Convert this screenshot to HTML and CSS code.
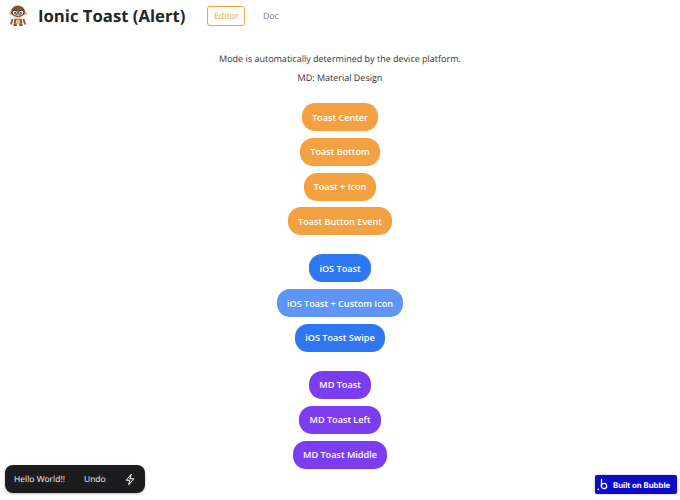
FILE: index.html
```html
<!DOCTYPE html>
<html lang="en">
<head>
<meta charset="utf-8">
<title>Ionic Toast (Alert)</title>
<link rel="stylesheet" href="styles.css">
</head>
<body>
<header class="header">
  <svg class="logo" width="20" height="22" viewBox="0 0 24 27" aria-hidden="true">
    <circle cx="3.500" cy="10" r="2.600" fill="#e8b98a"/>
    <circle cx="20.500" cy="10" r="2.600" fill="#e8b98a"/>
    <ellipse cx="12" cy="8" rx="8.500" ry="7.500" fill="#8a5226"/>
    <ellipse cx="12" cy="12" rx="6.500" ry="4.500" fill="#eec39a"/>
    <circle cx="8" cy="9.500" r="3.200" fill="#fff" stroke="#2b2b2b" stroke-width="1.200"/>
    <circle cx="16" cy="9.500" r="3.200" fill="#fff" stroke="#2b2b2b" stroke-width="1.200"/>
    <circle cx="8.400" cy="9.800" r="1.100" fill="#222"/>
    <circle cx="15.600" cy="9.800" r="1.100" fill="#222"/>
    <path d="M9 14h6" stroke="#7a3d1c" stroke-width="1"/>
    <path d="M7.500 17h9l1 6h-11z" fill="#8a5226"/>
    <ellipse cx="12" cy="20.500" rx="3" ry="3" fill="#e8b98a"/>
    <path d="M5 18l-1.500 5M19 18l1.500 5" stroke="#8a5226" stroke-width="2.200" stroke-linecap="round"/>
    <ellipse cx="8.500" cy="24.500" rx="2.500" ry="1.300" fill="#7a4520"/>
    <ellipse cx="15.500" cy="24.500" rx="2.500" ry="1.300" fill="#7a4520"/>
  </svg>
  <h1 class="title">Ionic Toast (Alert)</h1>
  <nav class="tabs">
    <span class="tab tab-active">Editor</span>
    <span class="tab">Doc</span>
  </nav>
</header>
<main class="main">
  <p class="line">Mode is automatically determined by the device platform.</p>
  <p class="line line-second">MD: Material Design</p>
  <div class="group">
    <button class="btn orange">Toast Center</button>
    <button class="btn orange">Toast Bottom</button>
    <button class="btn orange">Toast + Icon</button>
    <button class="btn orange">Toast Button Event</button>
  </div>
  <div class="group">
    <button class="btn blue">iOS Toast</button>
    <button class="btn blue-light">iOS Toast + Custom Icon</button>
    <button class="btn blue">iOS Toast Swipe</button>
  </div>
  <div class="group">
    <button class="btn purple">MD Toast</button>
    <button class="btn purple">MD Toast Left</button>
    <button class="btn purple">MD Toast Middle</button>
  </div>
</main>
<div class="toast">
  <span class="toast-msg">Hello World!!</span>
  <span class="toast-undo">Undo</span>
  <svg class="toast-icon" width="12" height="13" viewBox="0 0 24 24" fill="none" stroke="#fff" stroke-width="2" stroke-linejoin="round" stroke-linecap="round" aria-hidden="true">
    <path d="M14.500 1.500 4.500 13.500h7l-2 9 10-12h-7z"/>
  </svg>
</div>
<div class="bubble">
  <svg class="bubble-logo" width="12" height="13" viewBox="0 0 12 13" fill="none" stroke="#fff" stroke-width="1.300" aria-hidden="true">
    <path d="M4.500 1v7"/>
    <circle cx="7" cy="8" r="2.700"/>
    <circle cx="1.300" cy="11.300" r="0.900" fill="#fff" stroke="none"/>
  </svg>
  <span>Built on Bubble</span>
</div>
</body>
</html>
```

FILE: styles.css
```css
* { box-sizing: border-box; }
html, body { margin: 0; padding: 0; }
body {
  width: 680px;
  height: 500px;
  position: relative;
  overflow: hidden;
  background: #fff;
  font-family: "Open Sans", sans-serif;
  color: #333;
  text-rendering: geometricPrecision;
}
.header {
  display: flex;
  align-items: center;
  height: 31px;
  padding-left: 8px;
}
.logo { flex: none; margin-right: 10px; }
.title {
  margin: 0;
  font-size: 16.700px;
  font-weight: 700;
  color: #262626;
  white-space: nowrap;
}
.tabs {
  display: flex;
  align-items: center;
  margin-left: 22px;
  gap: 18px;
}
.tab {
  font-size: 8.800px;
  color: #7a7a7a;
}
.tab-active {
  display: flex;
  align-items: center;
  height: 20px;
  padding: 0 5.500px;
  border: 1px solid #f4a142;
  border-radius: 3px;
  color: #f4a142;
}
.main {
  display: flex;
  flex-direction: column;
  align-items: center;
  padding-top: 21px;
}
.line {
  margin: 0;
  font-size: 9px;
  line-height: 14px;
  color: #333;
}
.line-second { margin-top: 5px; }
.group {
  display: flex;
  flex-direction: column;
  align-items: center;
  gap: 6.800px;
  margin-bottom: 19px;
}
.line-second + .group { margin-top: 18px; }
.btn {
  height: 28px;
  padding: 0 10px;
  border: 0;
  border-radius: 13px;
  font-family: inherit;
  font-size: 9.150px;
  font-weight: 600;
  color: #fff;
  white-space: nowrap;
}
.orange { background: #f4a142; }
.blue { background: #2f77f2; }
.blue-light { background: #5e95f7; }
.purple { background: #7c3df0; }
.toast {
  position: absolute;
  left: 5px;
  top: 465px;
  width: 140px;
  height: 28px;
  display: flex;
  align-items: center;
  background: #1c1c1e;
  border-radius: 8px;
  padding-left: 9px;
  color: #f2f2f2;
  font-size: 8.500px;
  box-shadow: 0 1px 3px rgba(0,0,0,.25);
}
.toast-undo { margin-left: 19px; }
.toast-icon { margin-left: 18px; }
.bubble {
  position: absolute;
  left: 595px;
  top: 475px;
  width: 82px;
  height: 19px;
  display: flex;
  align-items: center;
  gap: 4px;
  padding-left: 2px;
  background: #0b0bc9;
  border-radius: 2px;
  color: #fff;
  font-size: 7.800px;
  font-weight: 700;
  font-family: "Inter", sans-serif;
  white-space: nowrap;
  box-shadow: 0 0 3px rgba(0,0,0,.25);
}
.bubble-logo { flex: none; }
```
